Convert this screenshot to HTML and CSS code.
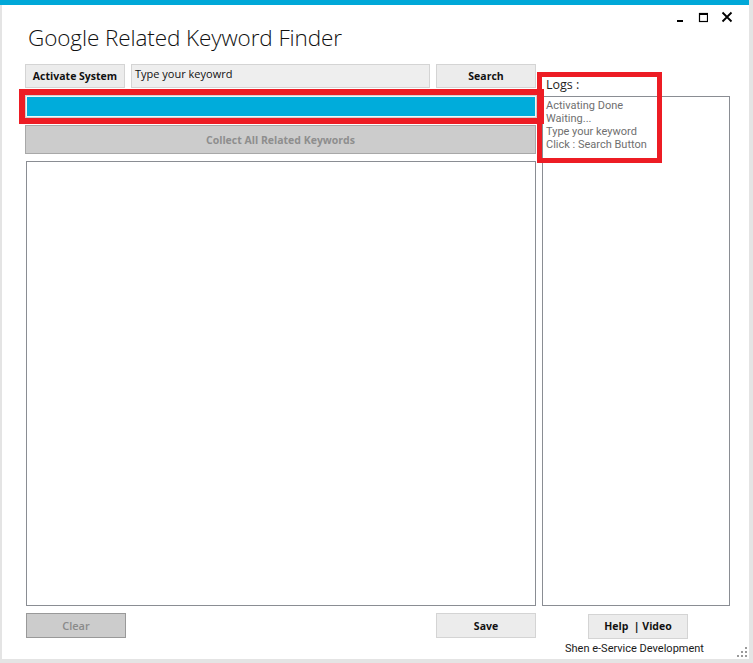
FILE: index.html
```html
<!DOCTYPE html>
<html>
<head>
<meta charset="utf-8">
<link rel="stylesheet" href="styles.css">
</head>
<body>
<div class="topbar"></div>
<div class="window">
  <div class="header">
    <h1 class="title">Google Related Keyword Finder</h1>
    <div class="controls">
      <svg class="ctl" width="10" height="12" viewBox="0 0 10 12"><rect x="2" y="9" width="6" height="2" fill="#000"/></svg>
      <svg class="ctl" width="10" height="12" viewBox="0 0 10 12"><rect x="1.5" y="2.5" width="8" height="8" fill="none" stroke="#000" stroke-width="1.2"/><rect x="1" y="2" width="9" height="2" fill="#000"/></svg>
      <svg class="ctl" width="12" height="12" viewBox="0 0 12 12"><path d="M1.5 1.5 L10.5 10.5 M10.5 1.5 L1.5 10.5" stroke="#000" stroke-width="1.8"/></svg>
    </div>
  </div>
  <div class="content">
    <div class="left">
      <div class="toolrow">
        <button class="btn">Activate System</button>
        <div class="input">Type your keyowrd</div>
        <button class="btn">Search</button>
      </div>
      <div class="progress"><div class="progress-fill"></div></div>
      <button class="collect">Collect All Related Keywords</button>
      <div class="listbox"></div>
      <div class="bottomrow">
        <button class="clear">Clear</button>
        <button class="btn">Save</button>
      </div>
    </div>
    <div class="right">
      <div class="logs-label">Logs :</div>
      <div class="logbox">
        <div class="logline">Activating Done</div>
        <div class="logline">Waiting...</div>
        <div class="logline">Type your keyword</div>
        <div class="logline">Click : Search Button</div>
      </div>
      <div class="helprow"><button class="btn">Help &nbsp;| Video</button></div>
      <div class="credit">Shen e-Service Development</div>
    </div>
  </div>
  <div class="mark mark-progress"></div>
  <div class="mark mark-logs"></div>
  <div class="grip">
    <span class="d d1"></span><span class="d d2"></span><span class="d d3"></span>
    <span class="d d4"></span><span class="d d5"></span><span class="d d6"></span>
  </div>
</div>
</body>
</html>
```
FILE: styles.css
```css
* { box-sizing: border-box; }
html, body {
  margin: 0;
  padding: 0;
}
body {
  width: 753px;
  height: 663px;
  overflow: hidden;
  background: #e4e4e4;
  font-family: "Open Sans", "Noto Sans", sans-serif;
  color: #1e1e1e;
}
.topbar {
  width: 749px;
  height: 5px;
  background: #00a8d8;
}
.window {
  position: relative;
  margin-left: 2px;
  width: 747px;
  height: 654px;
  background: #ffffff;
}
.header {
  display: flex;
  justify-content: space-between;
  align-items: flex-start;
  height: 59px;
  padding-left: 26px;
  padding-right: 16px;
}
.title {
  margin: 18px 0 0 0;
  font-weight: 300;
  font-size: 22.5px;
  line-height: 30px;
  color: #111;
  letter-spacing: -0.1px;
}
.controls {
  display: flex;
  gap: 13px;
  margin-top: 6px;
}
.ctl { display: block; }
.content {
  display: flex;
  gap: 5px;
  padding-left: 23px;
}
.left {
  width: 512px;
  display: flex;
  flex-direction: column;
  gap: 7px;
}
.toolrow {
  display: flex;
  gap: 6px;
  height: 24px;
}
.btn {
  width: 100px;
  height: 24px;
  padding: 0;
  margin: 0;
  background: #ececec;
  border: 1px solid #d4d4d4;
  font-family: "Open Sans", "Noto Sans", sans-serif;
  font-weight: 700;
  font-size: 10.5px;
  color: #111;
  text-align: center;
  line-height: 22px;
}
.input {
  width: 299px;
  height: 24px;
  background: #eeeeee;
  border: 1px solid #d4d4d4;
  font-size: 11px;
  line-height: 17px;
  padding-left: 3px;
  color: #111;
}
.progress {
  width: 512px;
  height: 23px;
  border: 1px solid #cfcfcf;
  padding: 1px;
  background: #f4f4f4;
}
.progress-fill {
  width: 100%;
  height: 100%;
  background: #00acdb;
}
.collect {
  width: 511px;
  height: 29px;
  margin: 0;
  padding: 0;
  background: #cccccc;
  border: 1px solid #a8a8a8;
  font-family: "Open Sans", "Noto Sans", sans-serif;
  font-weight: 700;
  font-size: 10.5px;
  color: #8e8e8e;
}
.listbox {
  width: 510px;
  height: 445px;
  margin-left: 1px;
  border: 1px solid #8a8d93;
  background: #fff;
}
.bottomrow {
  display: flex;
  justify-content: space-between;
  width: 511px;
  padding-left: 1px;
  height: 25px;
}
.bottomrow .btn { height: 25px; }
.clear {
  width: 100px;
  height: 25px;
  margin: 0;
  padding: 0;
  background: #cccccc;
  border: 1px solid #999999;
  font-family: "Open Sans", "Noto Sans", sans-serif;
  font-weight: 600;
  font-size: 11px;
  color: #8a8a8a;
}
.right {
  width: 188px;
  display: flex;
  flex-direction: column;
}
.logs-label {
  height: 32px;
  padding-top: 13px;
  padding-left: 4px;
  font-size: 12.5px;
  line-height: 15px;
  color: #1e1e1e;
}
.logbox {
  height: 510px;
  border: 1px solid #8a8d93;
  padding: 2px 3px;
  font-family: Roboto, "Open Sans", sans-serif;
  font-size: 11px;
  line-height: 13px;
  color: #6f6f6f;
}
.logline {
  height: 13px;
}
.helprow {
  margin-top: 7px;
  padding-left: 46px;
}
.helprow .btn { height: 25px; }
.credit {
  margin-top: 3px;
  padding-left: 23px;
  font-family: Roboto, "Open Sans", sans-serif;
  font-size: 11px;
  line-height: 14px;
  color: #1a1a1a;
}
.mark {
  position: absolute;
  border: 6px solid #ed1c24;
}
.mark-progress {
  left: 17px;
  top: 84px;
  width: 525px;
  height: 35px;
}
.mark-logs {
  left: 535px;
  top: 67px;
  width: 125px;
  height: 91px;
  border-width: 5px;
}
.grip {
  position: absolute;
  left: 735px;
  top: 642px;
  width: 10px;
  height: 10px;
}
.d {
  position: absolute;
  width: 2px;
  height: 2px;
  background: #9a9a9a;
}
.d1 { left: 8px; top: 0; }
.d2 { left: 4px; top: 4px; }
.d3 { left: 8px; top: 4px; }
.d4 { left: 0; top: 8px; }
.d5 { left: 4px; top: 8px; }
.d6 { left: 8px; top: 8px; }
```
